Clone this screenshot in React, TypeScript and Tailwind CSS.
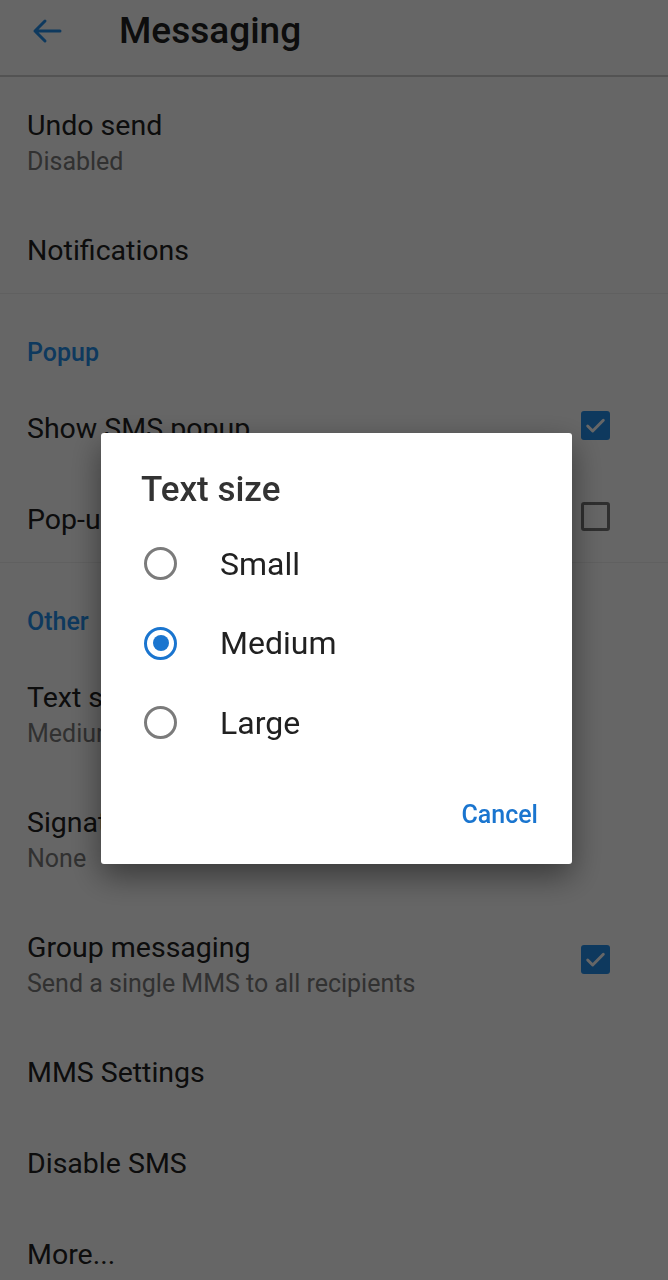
import React from 'react';

type Row =
  | { kind: 'header'; label: string }
  | { kind: 'divider' }
  | { kind: 'item'; title: string; summary?: string; checkbox?: boolean };

const rows: Row[] = [
  { kind: 'item', title: 'Undo send', summary: 'Disabled' },
  { kind: 'item', title: 'Notifications' },
  { kind: 'divider' },
  { kind: 'header', label: 'Popup' },
  { kind: 'item', title: 'Show SMS popup', checkbox: true },
  { kind: 'item', title: 'Pop-up message for all app', checkbox: false },
  { kind: 'divider' },
  { kind: 'header', label: 'Other' },
  { kind: 'item', title: 'Text size', summary: 'Medium' },
  { kind: 'item', title: 'Signature', summary: 'None' },
  { kind: 'item', title: 'Group messaging', summary: 'Send a single MMS to all recipients', checkbox: true },
  { kind: 'item', title: 'MMS Settings' },
  { kind: 'item', title: 'Disable SMS' },
  { kind: 'item', title: 'More...' },
];

function Checkbox({ checked }: { checked: boolean }) {
  if (checked) {
    return (
      <span className="flex h-[29px] w-[29px] items-center justify-center rounded-[3px] bg-[#2590ec]">
        <svg width="25" height="25" viewBox="0 0 24 24" fill="none">
          <path d="M4.5 12.5l4.8 4.8L19.5 7" stroke="white" strokeWidth="2.8" strokeLinecap="round" strokeLinejoin="round" />
        </svg>
      </span>
    );
  }
  return <span className="block h-[29px] w-[29px] rounded-[3px] border-[3px] border-[#757575]" />;
}

function SettingRow({ row }: { row: Row }) {
  if (row.kind === 'divider') return <div className="h-px bg-[#f0f0f0]" />;
  if (row.kind === 'header') {
    return (
      <div className="h-[86px] pl-[27px] pt-[45px] text-[25px] font-medium leading-[28px] text-[#2590ec]">
        {row.label}
      </div>
    );
  }
  const check = row.checkbox !== undefined && (
    <div className="shrink-0 pr-[58px]">
      <Checkbox checked={row.checkbox} />
    </div>
  );
  if (row.summary) {
    return (
      <div className="flex h-[125px] items-start">
        <div className="min-w-0 flex-1 pl-[27px] pt-[33px]">
          <div className="text-[28.5px] leading-[32px] text-[#212121]">{row.title}</div>
          <div className="mt-[6px] text-[25px] leading-[28px] text-[#7a7a7a]">{row.summary}</div>
        </div>
        {check && <div className="pt-[46px]">{check}</div>}
      </div>
    );
  }
  return (
    <div className="flex h-[91px] items-center">
      <div className="min-w-0 flex-1 truncate pl-[27px] pt-[8px] text-[28.5px] text-[#212121]">{row.title}</div>
      {check}
    </div>
  );
}

function Radio({ selected }: { selected: boolean }) {
  return (
    <span
      className={
        selected
          ? 'flex h-[33px] w-[33px] items-center justify-center rounded-full border-[3px] border-[#1a75cf]'
          : 'block h-[33px] w-[33px] rounded-full border-[3px] border-[#7b7b7b]'
      }
    >
      {selected && <span className="block h-[16px] w-[16px] rounded-full bg-[#1a75cf]" />}
    </span>
  );
}

const options = ['Small', 'Medium', 'Large'];

export default function App() {
  const selected = 'Medium';
  return (
    <div className="relative h-screen overflow-hidden bg-white font-['Roboto',sans-serif]">
      <header className="flex h-[77px] items-center border-b-2 border-[#cfcfcf] pb-[14px]">
        <svg className="ml-[32px]" width="30" height="26" viewBox="0 0 30 26" fill="none">
          <path d="M28 13H3M13 3L3 13l10 10" stroke="#2590ec" strokeWidth="3" strokeLinecap="round" strokeLinejoin="round" />
        </svg>
        <h1 className="ml-[57px] text-[37px] font-medium leading-none text-[#212121]">Messaging</h1>
      </header>

      <div>
        {rows.map((r, i) => (
          <SettingRow key={i} row={r} />
        ))}
      </div>

      <div className="fixed inset-0 bg-black/60">
        <div className="absolute left-[101px] top-[433px] w-[471px] rounded-[3px] bg-white shadow-[0_12px_32px_rgba(0,0,0,0.45)]">
          <h2 className="pl-[40px] pt-[37px] text-[35px] font-medium leading-[40px] text-[#333333]">Text size</h2>
          <div className="mt-[14px]">
            {options.map((o) => (
              <div key={o} className="flex h-[79.5px] items-center pl-[43px]">
                <Radio selected={o === selected} />
                <span className="ml-[43px] text-[32px] text-[#212121]">{o}</span>
              </div>
            ))}
          </div>
          <div className="mt-[24px] mb-[21px] flex h-[56px] items-center justify-end pr-[34px]">
            <button className="text-[25px] font-medium text-[#1a75cf]">Cancel</button>
          </div>
        </div>
      </div>
    </div>
  );
}
